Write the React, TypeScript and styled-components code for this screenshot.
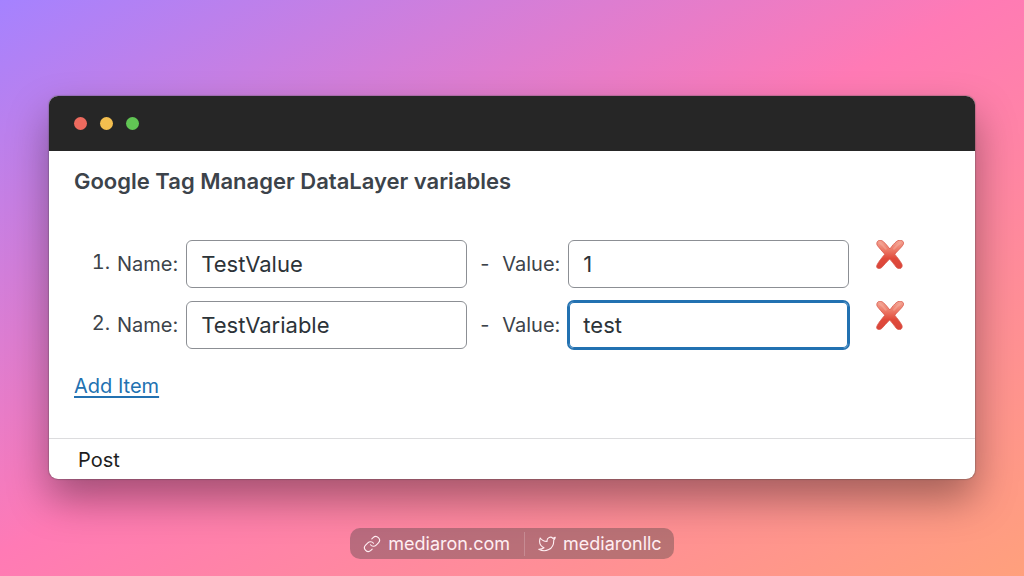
import React, { useState } from "react";
import styled, { createGlobalStyle, css } from "styled-components";
import { FiLink, FiTwitter } from "react-icons/fi";

const GlobalStyle = createGlobalStyle`
  *, *::before, *::after { box-sizing: border-box; }
  body {
    margin: 0;
    font-family: Inter, "Liberation Sans", sans-serif;
    color: #3c434a;
  }
`;

const Backdrop = styled.div`
  min-height: 100vh;
  display: flex;
  flex-direction: column;
  align-items: center;
  padding: 96px 49px 16px;
  background: linear-gradient(to bottom right, #a582ff 0%, #ff7ab5 48%, #ffa07c 100%);
`;

const Window = styled.main`
  width: 100%;
  border-radius: 9px;
  overflow: hidden;
  background: #fff;
  box-shadow: 0 20px 40px rgba(0, 0, 0, 0.36), 0 0 1px 1px rgba(90, 90, 90, 0.3);
`;

const TitleBar = styled.header`
  display: flex;
  align-items: center;
  gap: 13px;
  height: 55px;
  padding: 0 25px;
  background: #262626;
`;

const Light = styled.span<{ $color: string }>`
  width: 13px;
  height: 13px;
  border-radius: 50%;
  background: ${({ $color }) => $color};
`;

const Panel = styled.section`
  padding: 16px 25px 37px;
`;

const Heading = styled.h1`
  margin: 0 0 44px;
  font-size: 22px;
  line-height: 29px;
  font-weight: 600;
`;

const VariableList = styled.ol`
  display: flex;
  flex-direction: column;
  gap: 13px;
  margin: 0 0 23px;
  padding: 0;
  list-style: none;
  counter-reset: item;
`;

const VariableRow = styled.li`
  display: flex;
  align-items: center;
  font-size: 20px;
  counter-increment: item;

  &::before {
    content: counter(item) ".";
    width: 36px;
    margin-right: 7px;
    padding-bottom: 4px;
    text-align: right;
    font-variant-numeric: tabular-nums;
    flex-shrink: 0;
  }
`;

const Field = styled.label`
  display: flex;
  align-items: center;
  gap: 8px;
  min-width: 0;
`;

const Dash = styled.span`
  width: 35px;
  padding-left: 13px;
  flex-shrink: 0;
`;

const TextInput = styled.input<{ $active?: boolean }>`
  width: 281px;
  min-width: 0;
  height: 48px;
  padding: 0 14px;
  border: 1px solid #8c8f94;
  border-radius: 6px;
  outline: none;
  background: #fff;
  color: #2c3338;
  font: 400 22px/30px Inter, "Liberation Sans", sans-serif;
  ${({ $active }) =>
    $active &&
    css`
      border-color: #2271b1;
      box-shadow: 0 0 0 1px #2271b1, inset 0 0 0 1px #2271b1;
    `}
`;

const RemoveButton = styled.button`
  display: flex;
  align-self: flex-start;
  margin: 0 0 0 27px;
  padding: 0;
  border: 0;
  background: none;
  cursor: pointer;
`;

const AddLink = styled.a`
  display: inline-block;
  color: #2271b1;
  font-size: 20px;
  line-height: 29px;
  text-underline-offset: 3px;
`;

const StatusBar = styled.footer`
  padding: 6px 29px 4px;
  border-top: 1px solid #dcdcde;
  color: #1e1e1e;
  font-size: 20px;
  line-height: 30px;
`;

const Credits = styled.nav`
  display: flex;
  align-items: center;
  height: 31px;
  margin-top: 49px;
  padding: 0 12px 0 13px;
  border-radius: 10px;
  background: rgba(60, 60, 60, 0.36);
`;

const CreditLink = styled.a`
  display: flex;
  align-items: center;
  gap: 7px;
  color: #ffeef2;
  font-size: 18px;
  line-height: 24px;
  text-decoration: none;

  & + & {
    margin-left: 14px;
    padding-left: 13px;
    border-left: 1px solid rgba(255, 255, 255, 0.2);
  }
`;

const CrossMark = () => (
  <svg width="28" height="29" viewBox="0 0 28 29" aria-hidden="true">
    <defs>
      <linearGradient id="cross-fill" x1="0" y1="0" x2="0" y2="1">
        <stop offset="0" stopColor="#f3a594" />
        <stop offset="0.35" stopColor="#ec7866" />
        <stop offset="0.65" stopColor="#e04a3b" />
        <stop offset="1" stopColor="#d9453a" />
      </linearGradient>
    </defs>
    <path
      d="M.8 3.400C1-.1 4.800-.4 7.300 1.500 9.700 3.600 11.800 6.400 13.900 9 16 6 18.400 3 20.900 1.200 23.400-.6 27.700.2 27.600 3.200 27.500 5.600 22.300 10 18.800 14.200 21.200 17.400 24 20.600 25.700 23.800 26.900 26.200 25.800 28.600 23.300 28.600 21.200 28.600 20.200 27.400 19 25.600 17.300 23.200 15.700 21.200 13.600 19 10.600 22 8 25.200 5.500 27.700 4 29 .7 28.800.6 26.700.5 24.100 5.400 18.400 8.800 14.200 6.200 11.200 3.500 8.400 1.600 5.800 1 5 .7 4.200.8 3.400Z"
      fill="url(#cross-fill)"
      stroke="#d9574a"
      strokeWidth=".8"
    />
    <path
      d="M4 3.200C6 4.200 7.800 6.200 9.800 8.800M24.200 3C22 4.200 20 6.200 18 8.800"
      fill="none"
      stroke="#ffc4b5"
      strokeWidth="2"
      strokeLinecap="round"
      opacity=".3"
    />
  </svg>
);

const lights = ["#ed6a5e", "#f4bf4f", "#61c554"];

const initialRows = [
  { id: 1, name: "TestValue", value: "1" },
  { id: 2, name: "TestVariable", value: "test" },
];

export default function App() {
  const [rows, setRows] = useState(initialRows);
  const [activeId, setActiveId] = useState(2);

  const update = (id: number, key: "name" | "value", text: string) =>
    setRows(rows.map((row) => (row.id === id ? { ...row, [key]: text } : row)));

  const addRow = (event: React.MouseEvent) => {
    event.preventDefault();
    const id = Math.max(0, ...rows.map((row) => row.id)) + 1;
    setRows([...rows, { id, name: "", value: "" }]);
  };

  return (
    <Backdrop>
      <GlobalStyle />
      <Window>
        <TitleBar>
          {lights.map((color) => (
            <Light key={color} $color={color} />
          ))}
        </TitleBar>
        <Panel>
          <Heading>Google Tag Manager DataLayer variables</Heading>
          <VariableList>
            {rows.map((row) => (
              <VariableRow key={row.id}>
                <Field>
                  Name:
                  <TextInput
                    type="text"
                    value={row.name}
                    onChange={(e) => update(row.id, "name", e.target.value)}
                  />
                </Field>
                <Dash>-</Dash>
                <Field>
                  Value:
                  <TextInput
                    type="text"
                    value={row.value}
                    $active={row.id === activeId}
                    onFocus={() => setActiveId(row.id)}
                    onChange={(e) => update(row.id, "value", e.target.value)}
                  />
                </Field>
                <RemoveButton
                  type="button"
                  aria-label={`Remove ${row.name}`}
                  onClick={() => setRows(rows.filter((r) => r.id !== row.id))}
                >
                  <CrossMark />
                </RemoveButton>
              </VariableRow>
            ))}
          </VariableList>
          <AddLink href="#add" onClick={addRow}>
            Add Item
          </AddLink>
        </Panel>
        <StatusBar>Post</StatusBar>
      </Window>
      <Credits>
        <CreditLink href="#website">
          <FiLink size={18} strokeWidth={1.5} />
          mediaron.com
        </CreditLink>
        <CreditLink href="#twitter">
          <FiTwitter size={18} strokeWidth={1.5} />
          mediaronllc
        </CreditLink>
      </Credits>
    </Backdrop>
  );
}
